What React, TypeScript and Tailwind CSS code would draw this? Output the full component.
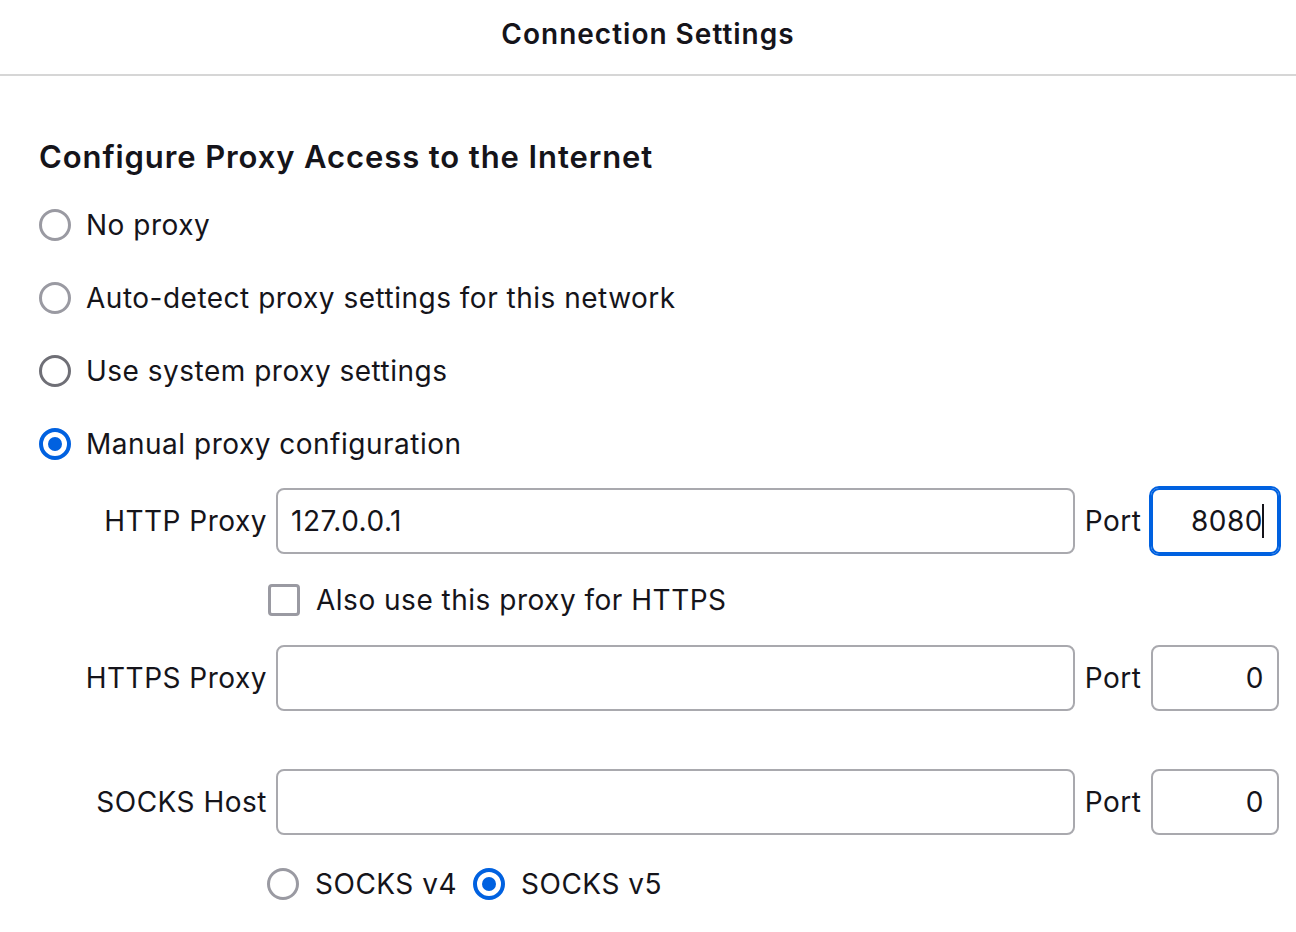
import clsx from 'clsx'

const font = { fontFamily: 'Inter, "Noto Sans", sans-serif' }

function Radio({ checked, tone = 'light' }: { checked?: boolean; tone?: 'light' | 'dark' }) {
  if (checked) {
    return (
      <svg width="32" height="32" viewBox="0 0 32 32" className="shrink-0">
        <circle cx="16" cy="16" r="14" fill="white" stroke="#0061e0" strokeWidth="4" />
        <circle cx="16" cy="16" r="7" fill="#0061e0" />
      </svg>
    )
  }
  return (
    <span
      className={clsx(
        'block w-8 h-8 shrink-0 rounded-full border-[3px] bg-white',
        tone === 'dark' ? 'border-[#6f6f76]' : 'border-[#9a9aa2]'
      )}
    />
  )
}

function RadioRow({ label, checked, tone }: { label: string; checked?: boolean; tone?: 'light' | 'dark' }) {
  return (
    <div className="flex items-center h-10 gap-[15px]">
      <Radio checked={checked} tone={tone} />
      <span>{label}</span>
    </div>
  )
}

interface ProxyRowProps {
  label: string
  host?: string
  port: string
  focused?: boolean
}

function ProxyRow({ label, host, port, focused }: ProxyRowProps) {
  return (
    <div className="flex items-center h-[66px]">
      <div className="w-[228px] shrink-0 text-right">{label}</div>
      <div className="ml-[9px] w-[799px] h-[66px] shrink-0 rounded-[8px] border-2 border-[#a9a9ae] flex items-center pl-[13px]">
        {host}
      </div>
      <div className="w-[76px] shrink-0 text-center">Port</div>
      <div
        className={clsx(
          'w-[128px] h-[66px] shrink-0 rounded-[8px] border-2 flex items-center justify-end pr-[13px]',
          focused ? 'border-[#0061e0] outline-2 outline-[#0061e0]' : 'border-[#a9a9ae]'
        )}
      >
        <span>{port}</span>
        {focused && <span className="block w-[2px] h-[34px] bg-[#15141a] -ml-px" />}
      </div>
    </div>
  )
}

export default function App() {
  return (
    <div className="w-[1296px] h-[932px] bg-white text-[#15141a] overflow-hidden" style={font}>
      <header className="h-[76px] border-b-2 border-[#d6d6d6] flex items-center justify-center pb-[6px]">
        <h1 className="text-[28px] font-semibold tracking-[1px]">Connection Settings</h1>
      </header>

      <main className="pl-[39px] text-[28px] leading-10 tracking-[0.5px]">
        <h2 className="mt-[63px] text-[31px] leading-9 font-semibold tracking-[0.9px]">
          Configure Proxy Access to the Internet
        </h2>

        <div className="mt-[30px] flex flex-col gap-[33px]">
          <RadioRow label="No proxy" />
          <RadioRow label="Auto-detect proxy settings for this network" />
          <RadioRow label="Use system proxy settings" tone="dark" />
          <RadioRow label="Manual proxy configuration" checked />
        </div>

        <div className="mt-[24px]">
          <ProxyRow label="HTTP Proxy" host="127.0.0.1" port="8080" focused />

          <div className="mt-[26px] ml-[229px] flex items-center h-10 gap-[16px]">
            <span className="block w-8 h-8 shrink-0 rounded-[4px] border-[3px] border-[#9a9aa2] bg-white" />
            <span>Also use this proxy for HTTPS</span>
          </div>

          <div className="mt-[25px]">
            <ProxyRow label="HTTPS Proxy" port="0" />
          </div>

          <div className="mt-[58px]">
            <ProxyRow label="SOCKS Host" port="0" />
          </div>

          <div className="mt-[29px] ml-[228px] flex items-center h-10">
            <div className="flex items-center gap-[16px]">
              <Radio />
              <span>SOCKS v4</span>
            </div>
            <div className="ml-4 flex items-center gap-[16px]">
              <Radio checked />
              <span>SOCKS v5</span>
            </div>
          </div>
        </div>
      </main>
    </div>
  )
}
